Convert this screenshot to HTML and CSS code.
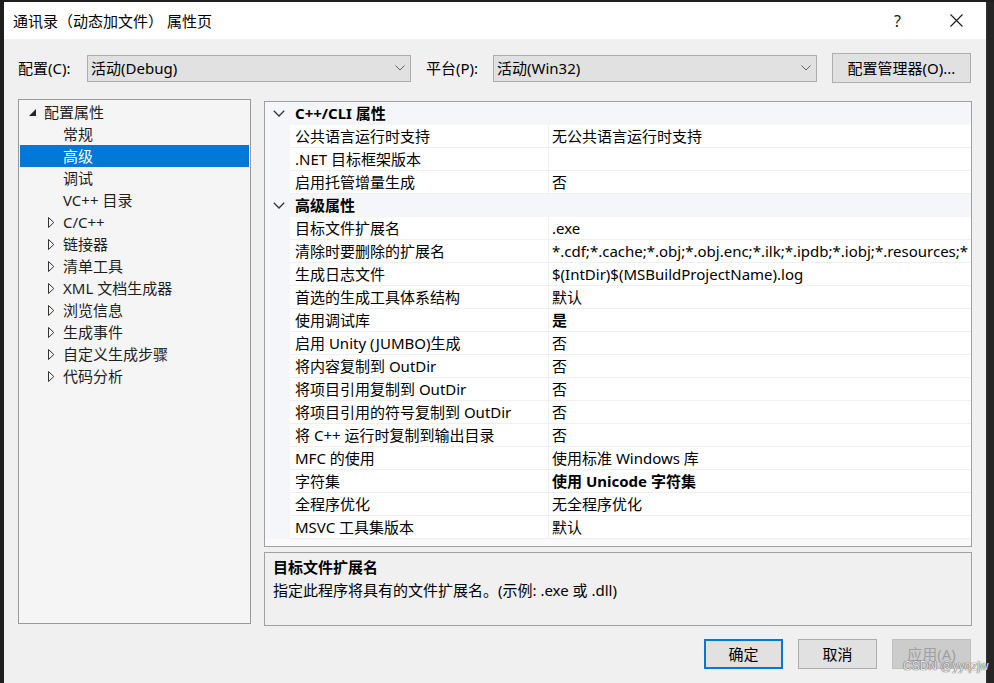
FILE: index.html
```html
<!DOCTYPE html>
<html lang="zh-CN">
<head>
<meta charset="utf-8">
<title>属性页</title>
<link rel="stylesheet" href="styles.css">
</head>
<body>
<div class="screen">
  <div class="edge-left"></div>
  <div class="dialog">
    <div class="titlebar">
      <div class="title">通讯录（动态加文件） 属性页</div>
      <div class="help">?</div>
      <div class="close">
        <svg width="13" height="13" viewBox="0 0 13 13"><path d="M0.5 0.5 L12.5 12.5 M12.5 0.5 L0.5 12.5" stroke="#1a1a1a" stroke-width="1.1" fill="none"/></svg>
      </div>
    </div>

    <div class="toolbar">
      <div class="lbl lbl-config">配置(C):</div>
      <div class="combo">
        <span class="combo-text">活动(Debug)</span>
        <svg class="combo-chev" width="10" height="6" viewBox="0 0 10 6"><polyline points="0.5,0.5 5,5 9.5,0.5" stroke="#606060" stroke-width="1" fill="none"/></svg>
      </div>
      <div class="lbl lbl-platform">平台(P):</div>
      <div class="combo">
        <span class="combo-text">活动(Win32)</span>
        <svg class="combo-chev" width="10" height="6" viewBox="0 0 10 6"><polyline points="0.5,0.5 5,5 9.5,0.5" stroke="#606060" stroke-width="1" fill="none"/></svg>
      </div>
      <div class="btn btn-manager">配置管理器(O)...</div>
    </div>

    <div class="main">
      <div class="tree">
        <div class="node lvl0">
          <span class="tog"><svg width="7" height="7" viewBox="0 0 7 7"><polygon points="7,0 7,7 0,7" fill="#262626"/></svg></span>
          <span>配置属性</span>
        </div>
        <div class="node lvl1"><span class="tog"></span><span>常规</span></div>
        <div class="node lvl1 selected"><span class="tog"></span><span>高级</span></div>
        <div class="node lvl1"><span class="tog"></span><span>调试</span></div>
        <div class="node lvl1"><span class="tog"></span><span>VC++ 目录</span></div>
        <div class="node lvl1"><span class="tog"><svg width="7" height="11" viewBox="0 0 7 11"><polygon points="0.5,0.5 5.8,5.5 0.5,10.5" fill="none" stroke="#333" stroke-width="1"/></svg></span><span>C/C++</span></div>
        <div class="node lvl1"><span class="tog"><svg width="7" height="11" viewBox="0 0 7 11"><polygon points="0.5,0.5 5.8,5.5 0.5,10.5" fill="none" stroke="#333" stroke-width="1"/></svg></span><span>链接器</span></div>
        <div class="node lvl1"><span class="tog"><svg width="7" height="11" viewBox="0 0 7 11"><polygon points="0.5,0.5 5.8,5.5 0.5,10.5" fill="none" stroke="#333" stroke-width="1"/></svg></span><span>清单工具</span></div>
        <div class="node lvl1"><span class="tog"><svg width="7" height="11" viewBox="0 0 7 11"><polygon points="0.5,0.5 5.8,5.5 0.5,10.5" fill="none" stroke="#333" stroke-width="1"/></svg></span><span>XML 文档生成器</span></div>
        <div class="node lvl1"><span class="tog"><svg width="7" height="11" viewBox="0 0 7 11"><polygon points="0.5,0.5 5.8,5.5 0.5,10.5" fill="none" stroke="#333" stroke-width="1"/></svg></span><span>浏览信息</span></div>
        <div class="node lvl1"><span class="tog"><svg width="7" height="11" viewBox="0 0 7 11"><polygon points="0.5,0.5 5.8,5.5 0.5,10.5" fill="none" stroke="#333" stroke-width="1"/></svg></span><span>生成事件</span></div>
        <div class="node lvl1"><span class="tog"><svg width="7" height="11" viewBox="0 0 7 11"><polygon points="0.5,0.5 5.8,5.5 0.5,10.5" fill="none" stroke="#333" stroke-width="1"/></svg></span><span>自定义生成步骤</span></div>
        <div class="node lvl1"><span class="tog"><svg width="7" height="11" viewBox="0 0 7 11"><polygon points="0.5,0.5 5.8,5.5 0.5,10.5" fill="none" stroke="#333" stroke-width="1"/></svg></span><span>代码分析</span></div>
      </div>

      <div class="right">
        <div class="grid">
          <div class="cat">
            <span class="gut"><svg width="12" height="7" viewBox="0 0 12 7"><polyline points="0.8,0.8 6,6 11.2,0.8" fill="none" stroke="#333" stroke-width="1.3"/></svg></span>
            <span class="cat-name">C++/CLI 属性</span>
          </div>
          <div class="row"><span class="gut"></span><span class="name">公共语言运行时支持</span><span class="val">无公共语言运行时支持</span></div>
          <div class="row"><span class="gut"></span><span class="name">.NET 目标框架版本</span><span class="val"></span></div>
          <div class="row"><span class="gut"></span><span class="name">启用托管增量生成</span><span class="val">否</span></div>
          <div class="cat">
            <span class="gut"><svg width="12" height="7" viewBox="0 0 12 7"><polyline points="0.8,0.8 6,6 11.2,0.8" fill="none" stroke="#333" stroke-width="1.3"/></svg></span>
            <span class="cat-name">高级属性</span>
          </div>
          <div class="row"><span class="gut"></span><span class="name">目标文件扩展名</span><span class="val">.exe</span></div>
          <div class="row"><span class="gut"></span><span class="name">清除时要删除的扩展名</span><span class="val">*.cdf;*.cache;*.obj;*.obj.enc;*.ilk;*.ipdb;*.iobj;*.resources;*</span></div>
          <div class="row"><span class="gut"></span><span class="name">生成日志文件</span><span class="val">$(IntDir)$(MSBuildProjectName).log</span></div>
          <div class="row"><span class="gut"></span><span class="name">首选的生成工具体系结构</span><span class="val">默认</span></div>
          <div class="row"><span class="gut"></span><span class="name">使用调试库</span><span class="val bold">是</span></div>
          <div class="row"><span class="gut"></span><span class="name">启用 Unity (JUMBO)生成</span><span class="val">否</span></div>
          <div class="row"><span class="gut"></span><span class="name">将内容复制到 OutDir</span><span class="val">否</span></div>
          <div class="row"><span class="gut"></span><span class="name">将项目引用复制到 OutDir</span><span class="val">否</span></div>
          <div class="row"><span class="gut"></span><span class="name">将项目引用的符号复制到 OutDir</span><span class="val">否</span></div>
          <div class="row"><span class="gut"></span><span class="name">将 C++ 运行时复制到输出目录</span><span class="val">否</span></div>
          <div class="row"><span class="gut"></span><span class="name">MFC 的使用</span><span class="val">使用标准 Windows 库</span></div>
          <div class="row"><span class="gut"></span><span class="name">字符集</span><span class="val bold">使用 Unicode 字符集</span></div>
          <div class="row"><span class="gut"></span><span class="name">全程序优化</span><span class="val">无全程序优化</span></div>
          <div class="row"><span class="gut"></span><span class="name">MSVC 工具集版本</span><span class="val">默认</span></div>
        </div>
        <div class="desc">
          <div class="desc-title">目标文件扩展名</div>
          <div class="desc-text">指定此程序将具有的文件扩展名。(示例: .exe 或 .dll)</div>
        </div>
      </div>
    </div>

    <div class="footer">
      <div class="btn btn-default">确定</div>
      <div class="btn">取消</div>
      <div class="btn btn-disabled">应用(A)</div>
    </div>
    <div class="watermark">CSDN @yyqzjw</div>
  </div>
  <div class="edge-right"></div>
</div>
</body>
</html>
```

FILE: styles.css
```css
* { box-sizing: border-box; }

html, body {
  margin: 0;
  padding: 0;
  background: #1e1e1e;
}

body {
  font-family: "Noto Sans", "Noto Sans CJK SC", sans-serif;
  font-size: 15px;
  color: #000;
}

.screen {
  display: flex;
  width: 994px;
  height: 683px;
  padding-top: 2px;
  overflow: hidden;
}

.edge-left {
  width: 4px;
  background: #1e1e1e;
}

.edge-right {
  width: 8px;
  background: #252526;
  border-left: 1px solid #333;
}

.dialog {
  position: relative;
  width: 982px;
  height: 681px;
  background: #f0f0f0;
  display: flex;
  flex-direction: column;
}

/* title bar */
.titlebar {
  height: 37px;
  background: #fff;
  display: flex;
  align-items: center;
  padding-left: 9px;
}

.title {
  flex: 1;
  line-height: 20px;
  margin-top: 1px;
}

.help {
  width: 8px;
  font-size: 16px;
  line-height: 20px;
  margin-right: 48px;
  color: #1a1a1a;
}

.close {
  width: 13px;
  height: 13px;
  margin-right: 23px;
  display: flex;
}

/* toolbar */
.toolbar {
  display: flex;
  align-items: center;
  height: 30px;
  margin-top: 14px;
  padding-left: 14px;
}

.lbl {
  line-height: 20px;
}

.lbl-config { width: 69px; }
.lbl-platform { width: 67px; margin-left: 15px; }

.combo {
  width: 324px;
  height: 27px;
  background: #e1e1e1;
  border: 1px solid #adadad;
  display: flex;
  align-items: center;
  padding-left: 3px;
  padding-right: 5px;
}

.combo-text {
  flex: 1;
  line-height: 20px;
}

.combo-chev {
  display: block;
}

.btn {
  display: flex;
  align-items: center;
  justify-content: center;
  background: #e1e1e1;
  border: 1px solid #adadad;
  line-height: 20px;
}

.btn-manager {
  width: 139px;
  height: 30px;
  margin-left: 15px;
}

/* main area */
.main {
  display: flex;
  margin-top: 16px;
  padding-left: 14px;
}

.tree {
  width: 233px;
  height: 525px;
  background: #f5f5f5;
  border: 1px solid #9a9a9a;
  padding: 1px;
  color: #1e1e1e;
}

.node {
  height: 22px;
  display: flex;
  align-items: center;
  line-height: 20px;
}

.node .tog {
  width: 15px;
  display: flex;
  align-items: center;
}

.lvl0 { padding-left: 9px; }
.lvl1 { padding-left: 28px; }

.selected {
  background: #0078d7;
  color: #fff;
}

.right {
  margin-left: 13px;
  margin-top: 2px;
  width: 708px;
  display: flex;
  flex-direction: column;
}

.grid {
  height: 446px;
  border: 1px solid #a0a0a0;
  background: #fafafa;
  overflow: hidden;
}

.cat, .row {
  height: 23px;
  display: flex;
  line-height: 22px;
}

.cat {
  background: #f4f6fa;
  font-weight: bold;
}

.gut {
  width: 25px;
  flex: none;
  background: #f4f6fa;
  display: flex;
  align-items: center;
  justify-content: center;
  padding-left: 2px;
}

.cat-name {
  padding-left: 5px;
}

.name {
  width: 259px;
  flex: none;
  background: #fff;
  border-bottom: 1px solid #f0f0f0;
  border-right: 1px solid #f0f0f0;
  padding-left: 5px;
  white-space: nowrap;
}

.val {
  flex: 1;
  min-width: 0;
  background: #fff;
  border-bottom: 1px solid #f0f0f0;
  padding-left: 3px;
  white-space: nowrap;
  overflow: hidden;
}

.bold { font-weight: bold; }

.desc {
  margin-top: 5px;
  height: 74px;
  border: 1px solid #a0a0a0;
  background: #f0f0f0;
  padding: 3px 0 0 8px;
}

.desc-title {
  font-weight: bold;
  line-height: 22px;
}

.desc-text {
  line-height: 24px;
}

/* footer */
.footer {
  display: flex;
  justify-content: flex-end;
  gap: 15px;
  margin-top: 13px;
  padding-right: 15px;
}

.footer .btn {
  width: 79px;
  height: 30px;
}

.btn-default {
  border: 2px solid #0078d7;
}

.btn-disabled {
  background: #cccccc;
  border-color: #bfbfbf;
  color: #a0a0a0;
}

.watermark {
  position: absolute;
  left: 899px;
  top: 657px;
  white-space: nowrap;
  font-family: "Liberation Sans", sans-serif;
  font-size: 12px;
  line-height: 14px;
  color: #e8e8e8;
  text-shadow: 0 0 1px #555, 0 0 1px #555;
}
```
